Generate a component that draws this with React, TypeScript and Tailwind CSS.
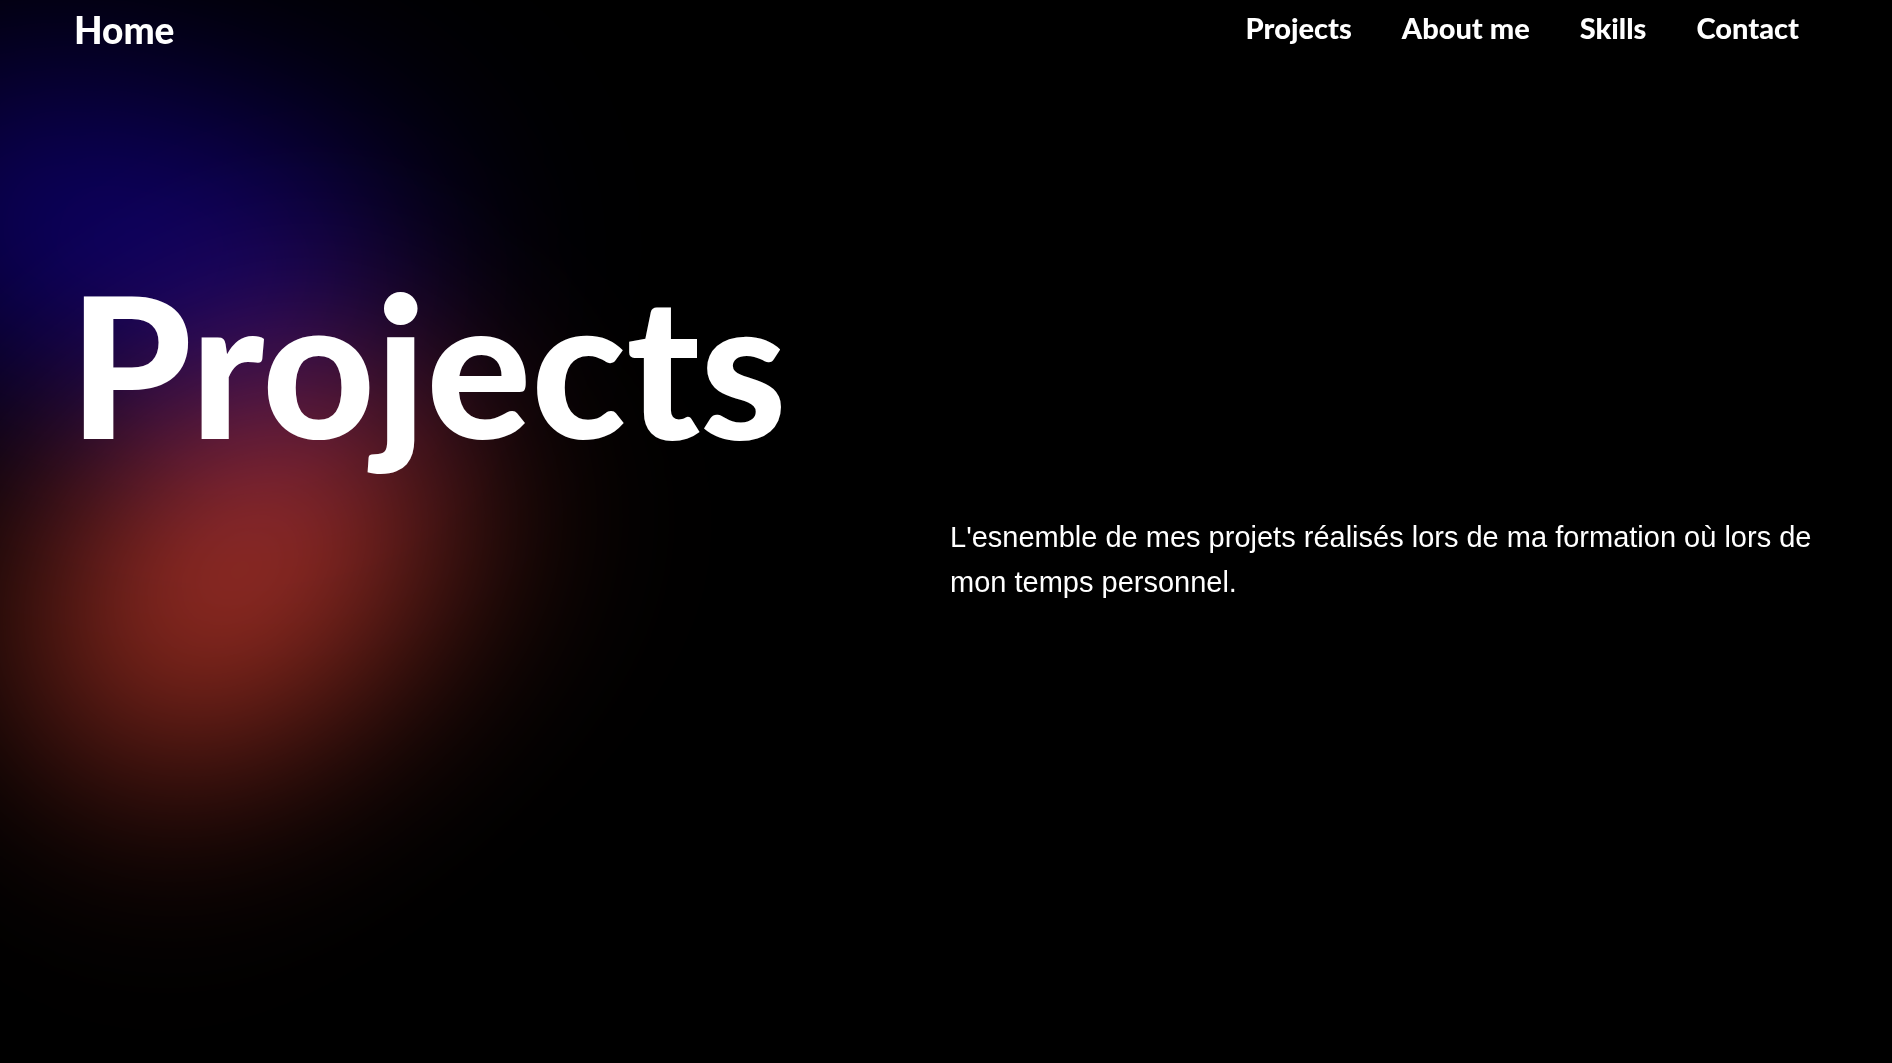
const links = [
  { label: "Projects", href: "#projects" },
  { label: "About me", href: "#about" },
  { label: "Skills", href: "#skills" },
  { label: "Contact", href: "#contact" },
];

function Glow() {
  return (
    <div aria-hidden="true" className="pointer-events-none absolute inset-0 overflow-hidden">
      <div className="absolute top-[105px] -left-[130px] h-[280px] w-[540px] rotate-[15deg] rounded-full bg-[#0e006e] blur-[110px]" />
      <div className="absolute top-[430px] left-[10px] h-[280px] w-[460px] -rotate-[40deg] rounded-full bg-[#ac3226] mix-blend-screen blur-[110px]" />
    </div>
  );
}

export default function App() {
  return (
    <div className="relative min-h-screen bg-black font-['Lato',sans-serif] text-white">
      <Glow />
      <header className="relative flex items-start justify-between pr-[93px] pl-[74px] font-black">
        <a href="#home" className="pt-2 text-[37px] leading-[44px]">
          Home
        </a>
        <nav className="flex gap-[50px] pt-2 text-[29px] leading-10">
          {links.map((link) => (
            <a key={link.label} href={link.href}>
              {link.label}
            </a>
          ))}
        </nav>
      </header>
      <main className="relative pt-[198px]">
        <h1 className="pl-[69px] text-[196px] leading-[228px] font-black">Projects</h1>
        <div className="grid grid-cols-2 pt-[37px]">
          <p className="col-start-2 pr-[68px] pl-1 font-['Liberation_Sans',sans-serif] text-[29px] leading-[45px]">
            L'esnemble de mes projets réalisés lors de ma formation où lors de mon temps personnel.
          </p>
        </div>
      </main>
    </div>
  );
}
